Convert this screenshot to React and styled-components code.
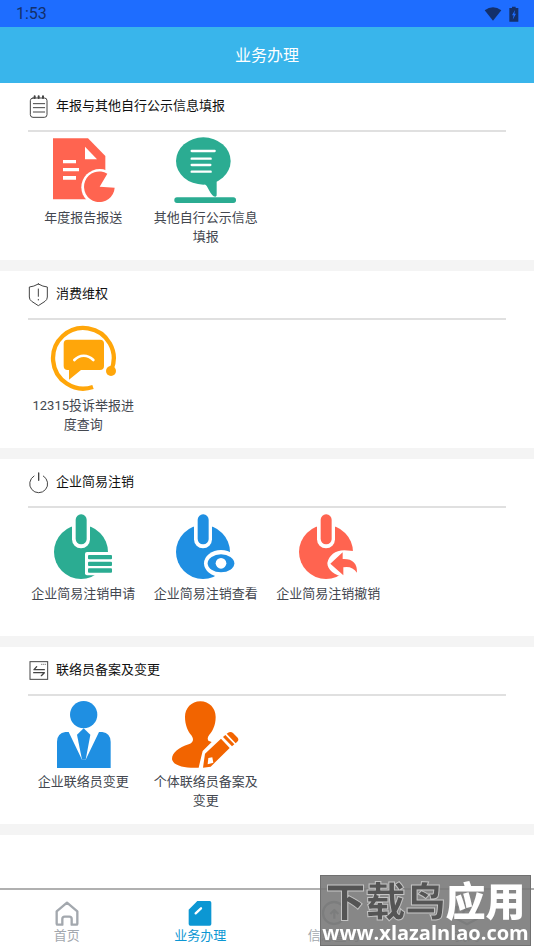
import React, { useState } from 'react';
import styled, { createGlobalStyle } from 'styled-components';

const GlobalStyle = createGlobalStyle`
    * {
        box-sizing: border-box;
    }

    body {
        margin: 0;
        background-color: #fff;
        font-family: Roboto, 'Noto Sans CJK SC', sans-serif;
    }

    button {
        border: none;
        background: none;
        font-family: inherit;
        cursor: pointer;
    }
`;

const Page = styled.div`
    display: flex;
    flex-direction: column;
    min-height: 100vh;
`;

const StatusBar = styled.div`
    display: flex;
    align-items: center;
    justify-content: space-between;
    height: 27px;
    padding: 0 15px 0 16px;
    background-color: #1e6dff;
    color: #13306b;
    font-size: 16px;
`;

const StatusIcons = styled.div`
    display: flex;
    align-items: center;
    gap: 7px;
    height: 24px;
`;

const Header = styled.header`
    display: flex;
    align-items: center;
    justify-content: center;
    height: 56px;
    padding-bottom: 2px;
    background-color: #39b5eb;
`;

const Title = styled.h1`
    margin: 0;
    color: #fff;
    font-size: 16px;
    font-weight: 400;
`;

const Main = styled.main`
    flex: 1;
`;

const Section = styled.section`
    min-height: 188px;
    border-bottom: 11px solid #f4f4f4;
`;

const SectionHead = styled.div`
    display: flex;
    align-items: center;
    gap: 7px;
    height: 49px;
    margin: 0 28px;
    border-bottom: 2px solid #e0e0e0;
`;

const SectionTitle = styled.h2`
    margin: 0;
    padding-bottom: 2px;
    color: #111;
    font-size: 13px;
    font-weight: 400;
    line-height: 20px;
`;

const Grid = styled.div`
    display: grid;
    grid-template-columns: repeat(4, 1fr);
    padding: 5px 22px 0;
`;

const Item = styled.button`
    display: flex;
    flex-direction: column;
    align-items: center;
    padding: 0 7px;
`;

const ItemLabel = styled.span`
    margin-top: 4px;
    color: #43474f;
    font-size: 13px;
    line-height: 19px;
    text-align: center;
`;

const TabBar = styled.nav`
    position: sticky;
    bottom: 0;
    display: flex;
    height: 62px;
    border-top: 2px solid #b0b0b0;
    background-color: #fff;
`;

const Tab = styled.button`
    flex: 1;
    display: flex;
    flex-direction: column;
    align-items: center;
    padding: 10px 0 0;
    color: ${({ $active }) => ($active ? '#0c97d3' : '#a3a8ae')};
    font-size: 13px;
    line-height: 20px;
`;

const Watermark = styled.div`
    position: fixed;
    right: 3px;
    bottom: 4px;
    display: flex;
    flex-direction: column;
    align-items: center;
    width: 211px;
    height: 71px;
    padding-top: 8px;
    border: 1px solid #707070;
    background-color: rgba(118, 118, 118, 0.88);
    color: #fff;
    white-space: nowrap;
    pointer-events: none;
`;

const WatermarkName = styled.div`
    font-size: 40px;
    font-weight: 900;
    line-height: 38px;
`;

const WatermarkDark = styled.span`
    color: #555;
    -webkit-text-stroke: 1px #c4c4c4;
`;

const WatermarkUrl = styled.div`
    font-family: 'Open Sans', sans-serif;
    font-size: 20px;
    font-weight: 700;
    line-height: 22px;
`;

// Iconos de la barra de estado
const WifiIcon = () => (
    <svg width="18" height="14" viewBox="0 0 54 42">
        <path d="M2 10Q27 -8 52 10L27 41Z" fill="#13306b" />
    </svg>
);

const BatteryIcon = () => (
    <svg width="10" height="16" viewBox="0 0 30 48">
        <path d="M9 2H20V6H28V47H1V6H9Z" fill="#13306b" />
        <path d="M18 12L9 28H14L11 41L21 23H16Z" fill="#1e6dff" />
    </svg>
);

const HeadSvg = ({ children }) => (
    <svg width="21" height="24" viewBox="0 0 63 72" fill="none" stroke="#444" strokeWidth="3" strokeLinecap="round">
        {children}
    </svg>
);

const NotepadIcon = () => (
    <HeadSvg>
        <rect x="7" y="9" width="50" height="58" rx="8" />
        <path d="M16 26H50M16 38H50M16 51H50" />
        <path d="M20 4V9M32 4V9M45 4V9" strokeWidth="6" />
    </HeadSvg>
);

const ShieldIcon = () => (
    <HeadSvg>
        <path d="M31 3Q45 11 58 12V42Q58 50 51 55L31 68L11 55Q4 50 4 42V12Q17 11 31 3Z" />
        <path d="M31 18V40M31 49V51" />
    </HeadSvg>
);

const PowerHeadIcon = () => (
    <HeadSvg>
        <path d="M18 15A27 27 0 1 0 46 15" />
        <path d="M32 6V28" strokeWidth="4" />
    </HeadSvg>
);

const ExchangeIcon = () => (
    <HeadSvg>
        <rect x="6" y="8" width="53" height="53" />
        <path d="M26 23L18 32H49M17 41H49L40 50" strokeLinejoin="round" strokeWidth="4" />
        <path d="M40 16H42M46 16H48M52 16H53" strokeWidth="2" />
    </HeadSvg>
);

const ItemSvg = ({ children, color }) => (
    <svg width="67" height="67" viewBox="0 0 201 201" fill={color}>
        {children}
    </svg>
);

const ReportIcon = () => (
    <ItemSvg color="#ff6450">
        <path d="M9 4H114L166 57V187H9Z" />
        <path d="M105 29V67H141Z" fill="#fff" />
        <path d="M39 69H78V79H39ZM39 93H87V103H39ZM39 117H78V128H39Z" fill="#fff" />
        <circle cx="149" cy="151" r="55" fill="#fff" />
        <path d="M149 149L172 110A46 46 0 1 0 194 152Z" />
    </ItemSvg>
);

const PublicInfoIcon = () => (
    <ItemSvg color="#2bac92">
        <ellipse cx="94" cy="72" rx="82" ry="71" />
        <path d="M96 139Q106 146 112 161Q121 179 131 179Q135 178 134 171V131Z" />
        <path d="M59 42H128M59 65H116M59 84H115M59 104H116" stroke="#fff" strokeWidth="7" strokeLinecap="round" />
        <rect x="7" y="181" width="185" height="17" rx="8" />
    </ItemSvg>
);

const ComplaintIcon = () => (
    <ItemSvg color="#ffa60a">
        <path d="M129 186A91 91 0 1 1 184 135" fill="none" stroke="#ffa60a" strokeWidth="13" />
        <circle cx="183" cy="138" r="15" />
        <path d="M53 44H150Q162 44 162 56V123Q162 135 150 135H93L57 164V135H53Q41 135 41 123V56Q41 44 53 44Z" />
        <path d="M73 105C89 88 113 88 130 105" fill="none" stroke="#fff" strokeWidth="8" strokeLinecap="round" />
    </ItemSvg>
);

const PowerShape = () => (
    <>
        <circle cx="93" cy="117" r="81" />
        <rect x="66" y="-16" width="54" height="122" rx="27" fill="#fff" />
        <rect x="77" y="4" width="33" height="90" rx="16" />
    </>
);

const CancelApplyIcon = () => (
    <ItemSvg color="#2bac92">
        <PowerShape />
        <rect x="105" y="117" width="92" height="70" rx="6" fill="#fff" />
        <rect x="114" y="126" width="72" height="13" rx="3" />
        <rect x="114" y="146" width="72" height="13" rx="3" />
        <rect x="114" y="166" width="72" height="13" rx="3" />
    </ItemSvg>
);

const CancelViewIcon = () => (
    <ItemSvg color="#1f8fe2">
        <PowerShape />
        <ellipse cx="147" cy="151" rx="51" ry="40" fill="#fff" />
        <ellipse cx="147" cy="151" rx="40" ry="27" />
        <circle cx="147" cy="151" r="16" fill="#fff" />
    </ItemSvg>
);

const CancelRevokeIcon = () => (
    <ItemSvg color="#ff6450">
        <PowerShape />
        <path d="M97 150C102 128 120 112 148 112L201 116V200L150 192C118 188 97 170 97 150Z" fill="#fff" />
        <path d="M106 152L143 118V138Q187 136 186 179Q171 158 145 163V187Z" />
    </ItemSvg>
);

const ContactIcon = () => (
    <ItemSvg color="#1f8fe2">
        <circle cx="101" cy="41" r="41" />
        <path d="M21 201V122Q22 96 46 93H56L96 176H107L147 93H157Q181 96 182 122V201Z" />
        <path d="M101 82L81 101L96 176H107L121 101Z" />
    </ItemSvg>
);

const PersonalIcon = () => (
    <ItemSvg color="#f26400">
        <path d="M85 1C112 1 131 22 131 48C131 75 120 92 112 101Q104 111 109 119L119 123L92 150L87 170L80 200C40 202 4 195 0 175C0 155 20 140 50 130C65 124 66 115 58 103C48 92 39 72 39 48C39 22 58 1 85 1Z" />
        <path d="M147 113L173 141L116 197L93 200L99 158ZM153 108L160 102L187 130L180 136ZM164 98L171 94Q177 91 183 96L197 110Q201 116 197 121L191 127Z" />
        <path d="M109 171L121 169L124 185L107 190Z" fill="#fff" />
    </ItemSvg>
);

// Iconos del menú inferior
const TabSvg = ({ children }) => (
    <svg width="26" height="26" viewBox="0 0 78 78" fill="none" stroke="currentColor" strokeWidth="7" strokeLinejoin="round">
        {children}
    </svg>
);

const HomeIcon = () => (
    <TabSvg>
        <path d="M8 71V34L39 8L70 34V71Q70 74 67 74H53V57Q53 50 46 50H32Q25 50 25 57V74H11Q8 74 8 71Z" />
    </TabSvg>
);

const BusinessIcon = () => (
    <TabSvg>
        <path d="M31 3H68Q73 3 73 8V72Q73 77 68 77H10Q5 77 5 72V29Z" fill="currentColor" stroke="none" />
        <path d="M26 40L42 25" stroke="#fff" strokeLinecap="round" />
    </TabSvg>
);

const SearchIcon = () => (
    <TabSvg>
        <circle cx="39" cy="39" r="33" />
        <path d="M28 42L40 30L52 42M40 32V56" />
    </TabSvg>
);

const MineIcon = () => (
    <TabSvg>
        <path d="M39 5L70 22V56L39 73L8 56V22Z" />
        <circle cx="39" cy="39" r="11" />
    </TabSvg>
);

const sections = [
    {
        title: '年报与其他自行公示信息填报',
        Icon: NotepadIcon,
        items: [
            { label: '年度报告报送', Icon: ReportIcon },
            { label: '其他自行公示信息填报', Icon: PublicInfoIcon },
        ],
    },
    {
        title: '消费维权',
        Icon: ShieldIcon,
        items: [{ label: '12315投诉举报进度查询', Icon: ComplaintIcon }],
    },
    {
        title: '企业简易注销',
        Icon: PowerHeadIcon,
        items: [
            { label: '企业简易注销申请', Icon: CancelApplyIcon },
            { label: '企业简易注销查看', Icon: CancelViewIcon },
            { label: '企业简易注销撤销', Icon: CancelRevokeIcon },
        ],
    },
    {
        title: '联络员备案及变更',
        Icon: ExchangeIcon,
        items: [
            { label: '企业联络员变更', Icon: ContactIcon },
            { label: '个体联络员备案及变更', Icon: PersonalIcon },
        ],
    },
];

const tabs = [
    { label: '首页', Icon: HomeIcon },
    { label: '业务办理', Icon: BusinessIcon },
    { label: '信息查询', Icon: SearchIcon },
    { label: '我的', Icon: MineIcon },
];

const App = () => {
    const [activeTab, setActiveTab] = useState('业务办理');

    return (
        <Page>
            <GlobalStyle />
            <StatusBar>
                <span>1:53</span>
                <StatusIcons>
                    <WifiIcon />
                    <BatteryIcon />
                </StatusIcons>
            </StatusBar>
            <Header>
                <Title>业务办理</Title>
            </Header>
            <Main>
                {sections.map(({ title, Icon, items }) => (
                    <Section key={title}>
                        <SectionHead>
                            <Icon />
                            <SectionTitle>{title}</SectionTitle>
                        </SectionHead>
                        <Grid>
                            {items.map((item) => (
                                <Item key={item.label} type="button">
                                    <item.Icon />
                                    <ItemLabel>{item.label}</ItemLabel>
                                </Item>
                            ))}
                        </Grid>
                    </Section>
                ))}
            </Main>
            <TabBar>
                {tabs.map(({ label, Icon }) => (
                    <Tab key={label} type="button" $active={label === activeTab} onClick={() => setActiveTab(label)}>
                        <Icon />
                        {label}
                    </Tab>
                ))}
            </TabBar>
            <Watermark>
                <WatermarkName>
                    <WatermarkDark>下载鸟</WatermarkDark>应用
                </WatermarkName>
                <WatermarkUrl>www.xlazalnlao.com</WatermarkUrl>
            </Watermark>
        </Page>
    );
};

export default App;
